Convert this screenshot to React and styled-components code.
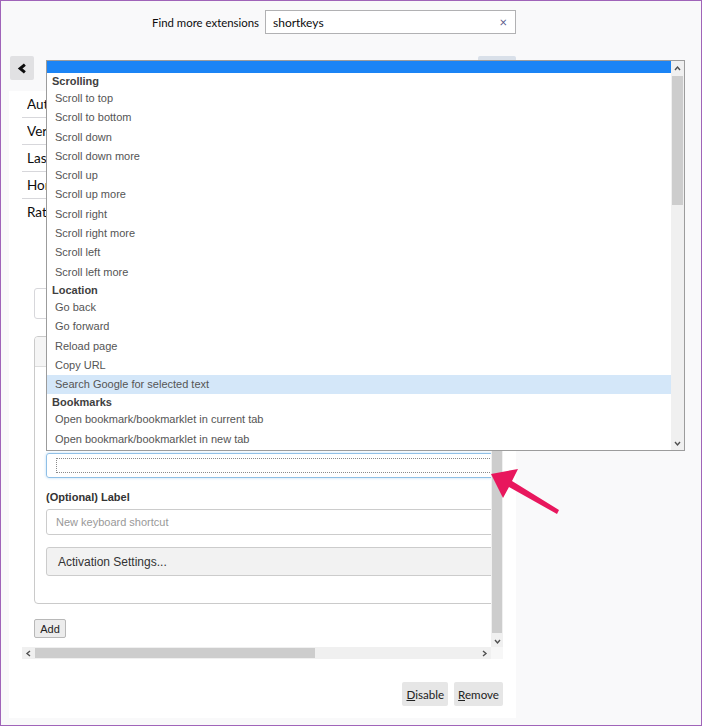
import { createGlobalStyle, styled } from "styled-components"

const GlobalStyle = createGlobalStyle`
    html, body {
        margin: 0;
        padding: 0;
        background: #f9f9fa;
    }
    * {
        box-sizing: border-box;
    }
`

const Page = styled.div`
    position: relative;
    width: 702px;
    height: 726px;
    border: 1px solid #a064b9;
    background: #f9f9fa;
    overflow: hidden;
    font-family: Lato, "Liberation Sans", sans-serif;
    color: #0c0c0d;
`

const TopBar = styled.div`
    width: 515px;
    padding-top: 9px;
    display: flex;
    justify-content: flex-end;
    align-items: center;
    gap: 6px;
`
const SearchLabel = styled.span`
    font-size: 11.4px;
`
const SearchBox = styled.div`
    width: 251px;
    height: 24px;
    border: 1px solid #b1b1b3;
    background: #fff;
    display: flex;
    align-items: center;
    justify-content: space-between;
    padding: 0 8px 0 7px;
    font-size: 12px;
`
const Clear = styled.span`
    color: #5c5c8e;
    font-size: 13px;
`

const NavRow = styled.div`
    width: 515px;
    margin-top: 22px;
    padding-left: 9px;
    display: flex;
    justify-content: space-between;
`
const BackButton = styled.div`
    width: 24px;
    height: 24px;
    border-radius: 2px;
    background: #e1e1e3;
    display: flex;
    align-items: center;
    justify-content: center;
`
const MoreButton = styled.div`
    width: 38px;
    height: 24px;
    border-radius: 2px;
    background: #d9e0e9;
`

const Card = styled.div`
    margin: 11px 0 0 8px;
    width: 507px;
    height: 627px;
    background: #fff;
    padding: 0 13px;
    display: flex;
    flex-direction: column;
`
const DetailRow = styled.div`
    height: 27px;
    line-height: 26px;
    padding-left: 5px;
    font-size: 13.5px;
    border-bottom: ${(p) => (p.last ? "none" : "1px solid #d7d7db")};
`
// the open dropdown covers everything right of x 46, so the key column stops there
const DetailKey = styled.span`
    display: block;
    width: 19px;
    overflow: hidden;
    white-space: nowrap;
`

const ScrollFrame = styled.div`
    margin-top: 14px;
    height: 419px;
    display: grid;
    grid-template-columns: 469px 12px;
    grid-template-rows: 407px 12px;
    font-family: "Liberation Sans", Arial, sans-serif;
`
const Viewport = styled.div`
    overflow: hidden;
    padding: 48px 0 0 12px;
`
const Wide = styled.div`
    width: 620px;
`
const OutlineBox = styled.div`
    height: 31px;
    border: 1px solid #d7d7db;
    border-radius: 3px;
`
const InnerCard = styled.div`
    margin-top: 17px;
    border: 1px solid #cacaca;
    border-radius: 4px;
    overflow: hidden;
`
const InnerHeader = styled.div`
    height: 30px;
    background: #f5f5f5;
    border-bottom: 1px solid #dddddd;
`
const InnerBody = styled.div`
    padding: 12px 0 27px 11px;
    display: flex;
    flex-direction: column;
`
const FieldLabel = styled.div`
    font-size: 11px;
    font-weight: bold;
    line-height: 14px;
    height: 14px;
    color: #333;
    margin-top: ${(p) => p.gap || 0}px;
`
const TextBox = styled.div`
    height: 26px;
    margin-top: ${(p) => p.gap || 0}px;
    border: 1px solid #cccccc;
    border-radius: 3px;
    background: #fff;
    padding-left: 9px;
    display: flex;
    align-items: center;
    font-size: 11px;
    color: #999;
`
const FocusBox = styled.div`
    height: 25px;
    margin-top: 2px;
    border: 1px solid #8fbfe6;
    border-radius: 3px;
    box-shadow: 0 0 3px #bcdcf5;
    padding: 4px 0 4px 9px;
`
const DottedRing = styled.div`
    height: 100%;
    border: 1px dotted #8a8a8a;
`
const SettingsButton = styled.div`
    height: 29px;
    margin-top: 12px;
    border: 1px solid #cccccc;
    border-radius: 3px;
    background: #f2f2f2;
    padding-left: 11px;
    display: flex;
    align-items: center;
    font-size: 12px;
    color: #333;
`
const AddButton = styled.div`
    margin-top: 15px;
    width: 32px;
    height: 19px;
    border: 1px solid #b8b8b8;
    border-radius: 2px;
    background: #ececec;
    font-size: 11px;
    color: #222;
    display: flex;
    align-items: center;
    justify-content: center;
`

const VTrack = styled.div`
    background: #f0f0f0;
    display: flex;
    flex-direction: column;
`
const VThumb = styled.div`
    flex: 1;
    margin: 0 1px 2px;
    background: #cdcdcd;
`
const ArrowCell = styled.div`
    height: ${(p) => p.size || 13}px;
    width: ${(p) => (p.horizontal ? `${p.size}px` : "auto")};
    flex: none;
    display: flex;
    align-items: center;
    justify-content: center;
`
const HTrack = styled.div`
    background: #f0f0f0;
    display: flex;
    align-items: stretch;
`
const HThumb = styled.div`
    width: 280px;
    margin: 1px 0;
    background: #cdcdcd;
`
const HSpace = styled.div`
    flex: 1;
`
const Corner = styled.div`
    background: #f7f7f7;
`

const Footer = styled.div`
    margin-top: 23px;
    display: flex;
    justify-content: flex-end;
    gap: 6px;
`
const ActionButton = styled.div`
    height: 24px;
    padding: 0 4px;
    border-radius: 2px;
    background: #e6e6e6;
    font-size: 11.6px;
    color: #222;
    display: flex;
    align-items: center;
    u {
        text-decoration: underline;
    }
`

const Dropdown = styled.div`
    position: absolute;
    left: 45px;
    top: 59px;
    width: 639px;
    height: 391px;
    border: 1px solid #9c9c9c;
    background: #fff;
    display: flex;
    font-family: "Liberation Sans", Arial, sans-serif;
    z-index: 5;
`
const List = styled.div`
    flex: 1;
    display: flex;
    flex-direction: column;
`
const Selected = styled.div`
    height: 12px;
    background: #1b84f5;
`
const Group = styled.div`
    height: 16px;
    line-height: 16px;
    padding-left: 5px;
    font-size: 11px;
    font-weight: bold;
    color: #3f3f3f;
`
const Option = styled.div`
    height: 19.3px;
    line-height: 19.3px;
    padding-left: 8px;
    font-size: 11px;
    color: #555;
    background: ${(p) => (p.hover ? "#d4e7f9" : "transparent")};
`
const DropBar = styled.div`
    width: 13px;
    background: #f0f0f0;
    display: flex;
    flex-direction: column;
`
const DropThumb = styled.div`
    height: 129px;
    margin: 0 1px;
    background: #cdcdcd;
`
const Spacer = styled.div`
    flex: 1;
`

const Pointer = styled.svg`
    position: absolute;
    left: 480px;
    top: 458px;
    z-index: 6;
`

const Chevron = ({ dir, size = 7, color = "#505050", width = 1.4 }) => {
    const paths = {
        up: "M1 5 L3.5 2 L6 5",
        down: "M1 2 L3.5 5 L6 2",
        left: "M5 1 L2 3.5 L5 6",
        right: "M2 1 L5 3.5 L2 6",
    }
    return (
        <svg width={size} height={size} viewBox="0 0 7 7">
            <path d={paths[dir]} fill="none" stroke={color} strokeWidth={width} />
        </svg>
    )
}

const scrolling = [
    "Scroll to top",
    "Scroll to bottom",
    "Scroll down",
    "Scroll down more",
    "Scroll up",
    "Scroll up more",
    "Scroll right",
    "Scroll right more",
    "Scroll left",
    "Scroll left more",
]
const location = ["Go back", "Go forward", "Reload page", "Copy URL", "Search Google for selected text"]
const bookmarks = ["Open bookmark/bookmarklet in current tab", "Open bookmark/bookmarklet in new tab"]

const details = ["Author", "Version", "Last Updated", "Homepage", "Rating"]

const App = () => {
    return (
        <>
            <GlobalStyle />
            <Page>
                <TopBar>
                    <SearchLabel>Find more extensions</SearchLabel>
                    <SearchBox>
                        shortkeys
                        <Clear>×</Clear>
                    </SearchBox>
                </TopBar>

                <NavRow>
                    <BackButton>
                        <Chevron dir="left" size={11} color="#0c0c0d" width={1.9} />
                    </BackButton>
                    <MoreButton />
                </NavRow>

                <Card>
                    {details.map((d, i) => (
                        <DetailRow key={d} last={i === details.length - 1}>
                            <DetailKey>{d}</DetailKey>
                        </DetailRow>
                    ))}

                    <ScrollFrame>
                        <Viewport>
                            <Wide>
                                <OutlineBox />
                                <InnerCard>
                                    <InnerHeader />
                                    <InnerBody>
                                        <FieldLabel />
                                        <TextBox gap={4} />
                                        <FieldLabel gap={14} />
                                        <FocusBox>
                                            <DottedRing />
                                        </FocusBox>
                                        <FieldLabel gap={12}>(Optional) Label</FieldLabel>
                                        <TextBox gap={5}>New keyboard shortcut</TextBox>
                                        <SettingsButton>Activation Settings...</SettingsButton>
                                    </InnerBody>
                                </InnerCard>
                                <AddButton>Add</AddButton>
                            </Wide>
                        </Viewport>
                        <VTrack>
                            <ArrowCell size={13}>
                                <Chevron dir="up" />
                            </ArrowCell>
                            <VThumb />
                            <ArrowCell size={12}>
                                <Chevron dir="down" />
                            </ArrowCell>
                        </VTrack>
                        <HTrack>
                            <ArrowCell horizontal size={13}>
                                <Chevron dir="left" />
                            </ArrowCell>
                            <HThumb />
                            <HSpace />
                            <ArrowCell horizontal size={13}>
                                <Chevron dir="right" />
                            </ArrowCell>
                        </HTrack>
                        <Corner />
                    </ScrollFrame>

                    <Footer>
                        <ActionButton>
                            <span>
                                <u>D</u>isable
                            </span>
                        </ActionButton>
                        <ActionButton>
                            <span>
                                <u>R</u>emove
                            </span>
                        </ActionButton>
                    </Footer>
                </Card>

                <Dropdown>
                    <List>
                        <Selected />
                        <Group>Scrolling</Group>
                        {scrolling.map((s) => (
                            <Option key={s}>{s}</Option>
                        ))}
                        <Group>Location</Group>
                        {location.map((s) => (
                            <Option key={s} hover={s.startsWith("Search")}>
                                {s}
                            </Option>
                        ))}
                        <Group>Bookmarks</Group>
                        {bookmarks.map((s) => (
                            <Option key={s}>{s}</Option>
                        ))}
                    </List>
                    <DropBar>
                        <ArrowCell size={15}>
                            <Chevron dir="up" />
                        </ArrowCell>
                        <DropThumb />
                        <Spacer />
                        <ArrowCell size={14}>
                            <Chevron dir="down" />
                        </ArrowCell>
                    </DropBar>
                </Dropdown>

                <Pointer width="90" height="62" viewBox="480 458 90 62">
                    <polygon
                        points="490,473 517,468 511,480 558,509 556,513 508,486 502,497"
                        fill="#e8175d"
                    />
                </Pointer>
            </Page>
        </>
    )
}

export default App
